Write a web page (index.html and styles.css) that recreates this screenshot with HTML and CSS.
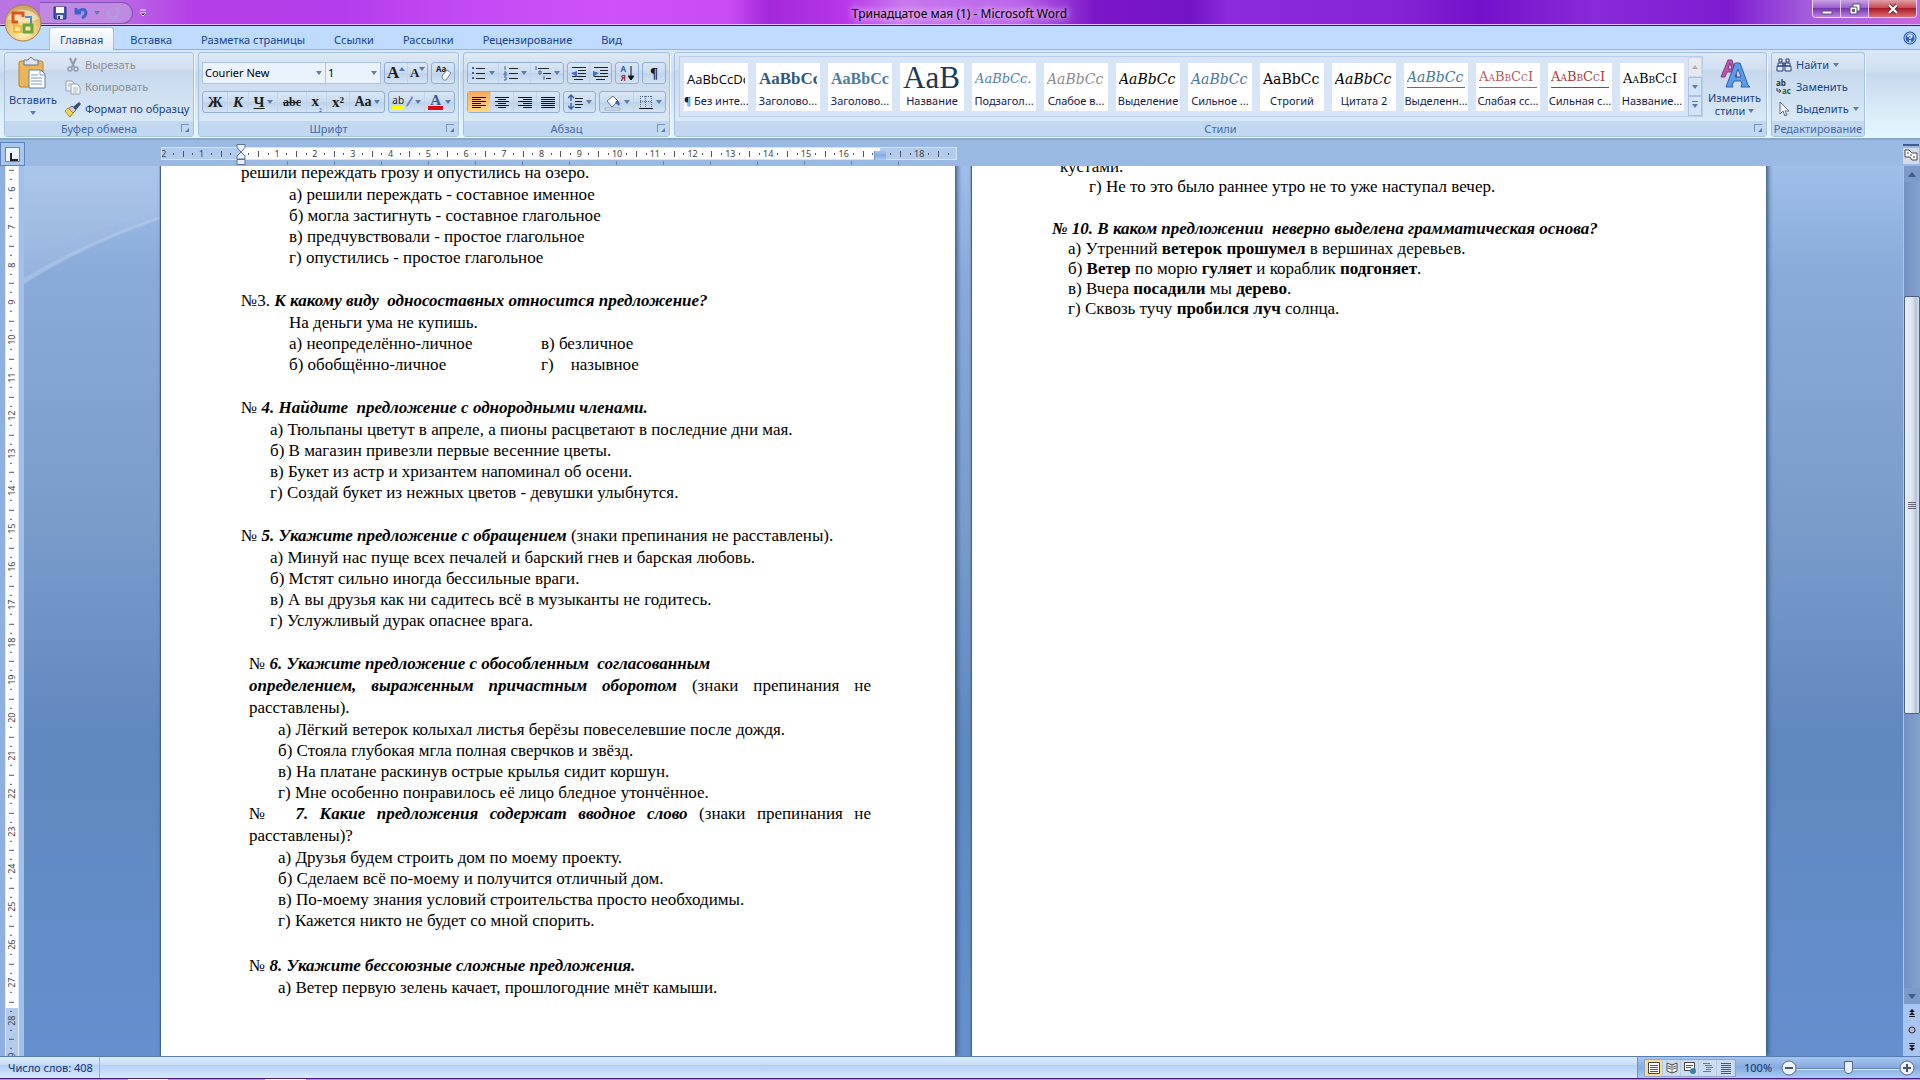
FILE: index.html
```html
<!DOCTYPE html>
<html lang="ru">
<head>
<meta charset="utf-8">
<title>Тринадцатое мая (1) - Microsoft Word</title>
<link rel="stylesheet" href="styles.css">
</head>
<body>
<div class="app">
  <header class="titlebar">
    <button class="orb" aria-label="Office"><svg width="38" height="38" viewBox="0 0 38 38"><defs><radialGradient id="orbfill" cx="50%" cy="75%" r="75%"><stop offset="0" stop-color="#fff6d0"/><stop offset=".45" stop-color="#f3cf83"/><stop offset="1" stop-color="#c9a05a"/></radialGradient></defs><circle cx="19" cy="19" r="18" fill="url(#orbfill)" stroke="#a8813f"/><path d="M3 15a17 14 0 0 1 32 0q-16 6-32 0z" fill="#fff" opacity=".45"/><g fill="none" stroke-width="3"><path d="M14 18H9V9h10v4" stroke="#d9541e"/><path d="M21 13h6v8" stroke="#4b93cf" stroke-width="2"/><path d="M10 21v7h7v-6z" stroke="#f2b830" stroke-width="2"/><path d="M20 21h8v7h-8z" stroke="#69a63a"/></g></svg></button>
    <div class="quick">
      <button aria-label="Сохранить"><svg width="16" height="16" viewBox="0 0 16 16"><path d="M2 2h12v12H3l-1-1z" fill="#3d56b8" stroke="#25367f"/><path d="M4 2h8v6H4z" fill="#fff"/><path d="M5 10h6v4H5z" fill="#d7dcef"/><path d="M6 11h2v3H6z" fill="#25367f"/></svg></button>
      <button aria-label="Отменить"><svg width="16" height="16" viewBox="0 0 16 16"><path d="M3 3v5h5M4 7q7-5 9 0 0 4-4 6" fill="none" stroke="#3f62c8" stroke-width="3"/></svg></button>
      <i class="arrow"></i>
      <button class="dim" aria-label="Повторить"><svg width="16" height="16" viewBox="0 0 16 16"><path d="M4 4q-3 9 4 9 6-1 5-8M10 4h4v4" fill="none" stroke="#b59adb" stroke-width="3"/></svg></button>
    </div>
    <button class="more" aria-label="Настройка"><svg width="8" height="8" viewBox="0 0 8 8"><path d="M1 1h6M1 4h6L4 7z" fill="#2c1554" stroke="#efe0ff"/></svg></button>
    <h1>Тринадцатое мая (1) - Microsoft Word</h1>
    <div class="winbtns">
      <button aria-label="Свернуть"><svg width="12" height="12" viewBox="0 0 12 12"><path d="M1 8h10v3H1z" fill="#fff" stroke="#57506e"/></svg></button>
      <button aria-label="Восстановить"><svg width="12" height="12" viewBox="0 0 12 12"><path d="M4 1h7v7H4z" fill="#fff" stroke="#57506e"/><path d="M1 4h7v7H1z" fill="#fff" stroke="#57506e"/><path d="M3.500 6.500h2v2h-2z" fill="#766c95" stroke="#57506e"/></svg></button>
      <button class="close" aria-label="Закрыть"><svg width="12" height="12" viewBox="0 0 12 12"><path d="M2 2l8 8M10 2l-8 8" stroke="#6a3035" stroke-width="4"/><path d="M2 2l8 8M10 2l-8 8" stroke="#fff" stroke-width="2"/></svg></button>
    </div>
  </header>

  <nav class="tabs">
    <a class="tab on" href="#home">Главная</a>
    <a class="tab" href="#insert">Вставка</a>
    <a class="tab" href="#layout">Разметка страницы</a>
    <a class="tab" href="#refs">Ссылки</a>
    <a class="tab" href="#mail">Рассылки</a>
    <a class="tab" href="#review">Рецензирование</a>
    <a class="tab" href="#view">Вид</a>
    <button class="help" aria-label="Справка"><svg width="14" height="14" viewBox="0 0 14 14"><circle cx="7" cy="7" r="6" fill="#2a62c4" stroke="#173a86"/><circle cx="7" cy="7" r="5" fill="none" stroke="#cfe1ff"/><path d="M5 6q0-2 2-2t2 1q0 1-2 2v1M7 9v2" fill="none" stroke="#fff" stroke-width="1.500"/></svg></button>
  </nav>

  <div class="ribbon">
    <section class="group g-clip">
      <div class="body">
        <button class="big"><svg width="30" height="32" viewBox="0 0 30 32"><rect x="1" y="4" width="24" height="26" rx="2" fill="#eab458" stroke="#b98232"/><path d="M6 3h4q3-5 6 0h4v5H6z" fill="#dfe5ee" stroke="#66758a"/><path d="M11 13h12l4 4v14H11z" fill="#fff" stroke="#5f7fae"/><path d="M22 13v5h5M13 18h7M13 21h11M13 24h11M13 27h11" fill="none" stroke="#7a98c8"/></svg><span>Вставить</span><i class="arrow"></i></button>
        <div class="stack">
          <button class="line off"><svg width="16" height="16" viewBox="0 0 16 16"><path d="M5 1l4 9M11 1L7 10" stroke="#8f9bab" stroke-width="2"/><circle cx="5" cy="12" r="2" fill="none" stroke="#8f9bab" stroke-width="1.500"/><circle cx="11" cy="12" r="2" fill="none" stroke="#8f9bab" stroke-width="1.500"/></svg>Вырезать</button>
          <button class="line off"><svg width="16" height="16" viewBox="0 0 16 16"><path d="M1 2h6l2 2v8H1z" fill="#eef2f8" stroke="#94a3b8"/><path d="M6 5h6l3 3v7H6z" fill="#f8fafd" stroke="#94a3b8"/><path d="M3 5h3M3 7h2M8 9h5M8 11h5M8 13h4" stroke="#a9b5c6"/></svg>Копировать</button>
          <button class="line"><svg width="16" height="16" viewBox="0 0 16 16"><path d="M14 1l2 2-5 6-3-3z" fill="#3d4b78"/><path d="M7 5l4 4-3 3-5-4z" fill="#c7cde0" stroke="#55618a"/><path d="M3 7l5 5-3 4-5-6z" fill="#f3d84f" stroke="#ad8a1e"/></svg>Формат по образцу</button>
        </div>
      </div>
      <h2>Буфер обмена<i class="dlg"></i></h2>
    </section>

    <section class="group g-font">
      <div class="body rows">
        <div class="row">
          <div class="combo">
            <span class="pick name"><select aria-label="Шрифт"><option>Courier New</option></select></span>
            <span class="pick size"><select aria-label="Размер"><option>1</option></select></span>
          </div>
          <div class="set w44"><button class="serif s16" aria-label="Увеличить">A<i class="arrow up high"></i></button><button class="serif s13" aria-label="Уменьшить">A<i class="arrow high"></i></button></div>
          <div class="set w24"><button aria-label="Очистить формат"><svg width="18" height="18" viewBox="0 0 18 18"><text x="2" y="8" font-family="Open Sans" font-size="8" font-weight="700" fill="#222">Aa</text><path d="M8 12l5-6 4 3-5 7q-4 1-4-4z" fill="#fff" stroke="#6e7f9c"/></svg></button></div>
        </div>
        <div class="row">
          <div class="set w184"><button class="serif s15"><b>Ж</b></button><button class="serif s15"><b><i>К</i></b></button><button class="serif s15 wide"><u><b>Ч</b></u><i class="arrow"></i></button><button class="serif s12"><s><b>abc</b></s></button><button class="serif s15"><b>x<sub>₂</sub></b></button><button class="serif s15"><b>x²</b></button><button class="serif s14"><b>Aa</b><i class="arrow"></i></button></div>
          <div class="set w67"><button class="hl" aria-label="Цвет выделения"><span class="ab">ab</span><svg width="7" height="12" viewBox="0 0 7 12"><path d="M6 0l1 2-5 8-2 1 1-3z" fill="#6a86b4"/></svg><i class="arrow"></i></button><button class="fc serif" aria-label="Цвет текста"><span class="aa">A</span><i class="arrow"></i></button></div>
        </div>
      </div>
      <h2>Шрифт<i class="dlg"></i></h2>
    </section>

    <section class="group g-para">
      <div class="body rows">
        <div class="row">
          <div class="set w98">
            <button aria-label="Маркеры"><svg width="16" height="16" viewBox="0 0 16 16"><path d="M1 3h2M1 8h2M1 13h2" stroke="#3c62a8" stroke-width="2"/><path d="M5 3.500h9M5 8.500h9M5 13.500h9" stroke="#222"/></svg><i class="arrow"></i></button>
            <button aria-label="Нумерация"><svg width="16" height="16" viewBox="0 0 16 16"><path d="M2 1v4M1 7h2v2H1v1h3M1 12h2v3H1" fill="none" stroke="#3c62a8"/><path d="M6 3.500h9M6 8.500h9M6 13.500h9" stroke="#222"/></svg><i class="arrow"></i></button>
            <button aria-label="Многоуровневый список"><svg width="18" height="16" viewBox="0 0 18 16"><path d="M2 1v4M5 6h2v3H5zM10 11v4" fill="none" stroke="#3c62a8"/><path d="M4 3.500h11M9 8.500h8M12 13.500h5" stroke="#222"/></svg><i class="arrow"></i></button>
          </div>
          <div class="set w44">
            <button aria-label="Уменьшить отступ"><svg width="16" height="16" viewBox="0 0 16 16"><path d="M1 2.500h14M7 5.500h8M7 8.500h8M1 11.500h14M3 14.500h9" stroke="#222"/><path d="M6 6v6L0 8z" fill="#3f72c4"/></svg></button>
            <button aria-label="Увеличить отступ"><svg width="16" height="16" viewBox="0 0 16 16"><path d="M1 2.500h14M7 5.500h8M7 8.500h8M1 11.500h14M3 14.500h9" stroke="#222"/><path d="M0 6v6l6-4z" fill="#3f72c4"/></svg></button>
          </div>
          <div class="set w24"><button class="sort" aria-label="Сортировка"><span><b>А</b><b>Я</b></span><svg width="6" height="16" viewBox="0 0 6 16"><path d="M3 1v12M0 11l3 4 3-4z" stroke="#111" fill="#111"/></svg></button></div>
          <div class="set w24"><button class="serif s15">¶</button></div>
        </div>
        <div class="row">
          <div class="set w93">
            <button class="on" aria-label="По левому краю"><svg width="16" height="16" viewBox="0 0 16 16"><path d="M1 3.500h14M1 5.500h9M1 7.500h14M1 9.500h9M1 11.500h14M1 13.500h9" stroke="#111"/></svg></button>
            <button aria-label="По центру"><svg width="16" height="16" viewBox="0 0 16 16"><path d="M1 3.500h14M4 5.500h8M1 7.500h14M4 9.500h8M1 11.500h14M4 13.500h8" stroke="#111"/></svg></button>
            <button aria-label="По правому краю"><svg width="16" height="16" viewBox="0 0 16 16"><path d="M1 3.500h14M6 5.500h9M1 7.500h14M6 9.500h9M1 11.500h14M6 13.500h9" stroke="#111"/></svg></button>
            <button aria-label="По ширине"><svg width="16" height="16" viewBox="0 0 16 16"><path d="M1 3.500h14M1 5.500h14M1 7.500h14M1 9.500h14M1 11.500h14M1 13.500h14" stroke="#111"/></svg></button>
          </div>
          <div class="set w32"><button aria-label="Интервал"><svg width="16" height="16" viewBox="0 0 16 16"><path d="M3 2v5M3 9v5M0 4l3-3 3 3M0 12l3 3 3-3" fill="none" stroke="#3f62a8" stroke-width="1.500"/><path d="M7 4.500h8M7 7.500h7M7 10.500h8M7 13.500h6" stroke="#222"/></svg><i class="arrow"></i></button></div>
          <div class="set w67">
            <button aria-label="Заливка"><svg width="18" height="17" viewBox="0 0 18 17"><path d="M3 7l6-5 5 5-6 6z" fill="#fff" stroke="#5a6f95"/><path d="M13 6q4 2 2 6-2-2-4-3z" fill="#3f62a8"/><path d="M1 14h15v2H1z" fill="#fff" stroke="#9aa8be"/></svg><i class="arrow"></i></button>
            <button aria-label="Границы"><svg width="16" height="16" viewBox="0 0 16 16"><path d="M2 2.500h12M2 7.500h12M2.500 2v11M7.500 2v11M13.500 2v11" stroke="#56657f" stroke-dasharray="1 1"/><path d="M1 14.500h14" stroke="#111"/></svg><i class="arrow"></i></button>
          </div>
        </div>
      </div>
      <h2>Абзац<i class="dlg"></i></h2>
    </section>

    <section class="group g-styles">
      <div class="body">
        <div class="gallery">
          <div class="cards">
            <button class="card"><span class="pv p-sans">AaBbCcDc</span><span class="cap">¶ Без инте...</span></button>
            <button class="card"><span class="pv p-h1">AaBbCc</span><span class="cap">Заголово...</span></button>
            <button class="card"><span class="pv p-h2">AaBbCc</span><span class="cap">Заголово...</span></button>
            <button class="card"><span class="pv p-title">AaB</span><span class="cap">Название</span></button>
            <button class="card"><span class="pv p-sub">AaBbCc.</span><span class="cap">Подзагол...</span></button>
            <button class="card"><span class="pv p-weak">AaBbCc</span><span class="cap">Слабое в...</span></button>
            <button class="card"><span class="pv p-em">AaBbCc</span><span class="cap">Выделение</span></button>
            <button class="card"><span class="pv p-strong">AaBbCc</span><span class="cap">Сильное ...</span></button>
            <button class="card"><span class="pv p-strict">AaBbCc</span><span class="cap">Строгий</span></button>
            <button class="card"><span class="pv p-em">AaBbCc</span><span class="cap">Цитата 2</span></button>
            <button class="card"><span class="pv p-strong ul">AaBbCc</span><span class="cap">Выделенн...</span></button>
            <button class="card"><span class="pv p-ref ul">AaBbCcI</span><span class="cap">Слабая сс...</span></button>
            <button class="card"><span class="pv p-ref dark ul">AaBbCcI</span><span class="cap">Сильная с...</span></button>
            <button class="card"><span class="pv p-ref black">AaBbCcI</span><span class="cap">Название...</span></button>
          </div>
          <div class="spin"><button class="flat" aria-label="Вверх"><i class="arrow up"></i></button><button aria-label="Вниз"><i class="arrow"></i></button><button aria-label="Все стили"><i class="arrow bar"></i></button></div>
        </div>
        <button class="big change"><svg width="32" height="32" viewBox="0 0 32 32"><path d="M2 20L9 3h4l5 17h-4l-1-5H8l-2 5zM9 12h4l-2-6z" fill="#c44fa8" stroke="#7b3c86"/><path d="M7 30L16 6h5l8 22 2 2h-9l1-3-1-3h-7l-2 4 1 2zM16 20h6l-3-8z" fill="#5d9be6" stroke="#2c5cab"/></svg><span>Изменить<br>стили <i class="arrow"></i></span></button>
      </div>
      <h2>Стили<i class="dlg"></i></h2>
    </section>

    <section class="group g-edit">
      <div class="body">
        <div class="stack">
          <button class="line"><svg width="16" height="16" viewBox="0 0 16 16"><path d="M3 2h3v3H3zM10 2h3v3h-3zM2 6h5v3H2zM9 6h5v3H9zM1 9h6v5H1zM9 9h6v5H9zM7 6h2v3H7z" fill="#dfe9fa" stroke="#243f78"/></svg>Найти<i class="arrow"></i></button>
          <button class="line"><svg width="16" height="16" viewBox="0 0 16 16"><text x="0" y="7" font-family="Open Sans" font-size="8" font-weight="700" fill="#333">ab</text><text x="6" y="15" font-family="Open Sans" font-size="8" font-weight="700" fill="#1e6b2c">ac</text><path d="M1 9v3h4M3 10l2 2-2 2" fill="none" stroke="#345"/></svg>Заменить</button>
          <button class="line"><svg width="16" height="16" viewBox="0 0 16 16"><path d="M4 1v12l3-3 2 5 2-1-2-4h4z" fill="#fff" stroke="#5b6b86"/></svg>Выделить<i class="arrow"></i></button>
        </div>
      </div>
      <h2>Редактирование</h2>
    </section>
  </div>

  <div class="rulerbar">
    <button class="tabsel" aria-label="Табуляция"><span></span></button>
    <div class="hruler">
      <div class="track"><div class="cells"><span>2</span><span>1</span><span></span><span>1</span><span>2</span><span>3</span><span>4</span><span>5</span><span>6</span><span>7</span><span>8</span><span>9</span><span>10</span><span>11</span><span>12</span><span>13</span><span>14</span><span>15</span><span>16</span><span></span><span>18</span><span></span></div></div>
      <svg class="mark left" width="10" height="22" viewBox="0 0 10 22"><path d="M1 .5h8v3L5 8 1 3.500zM1 15v-3l4-4 4 4v3zM1 15.500h8v5H1z" fill="#e9f1fc" stroke="#5c6f92"/></svg>
      <svg class="mark right" width="10" height="9" viewBox="0 0 10 9"><path d="M1 8.500V5l4-4 4 4v3.500z" fill="#e9f1fc" stroke="#5c6f92"/></svg>
    </div>
    <button class="rulerbtn" aria-label="Линейка"><svg width="14" height="12" viewBox="0 0 14 12"><path d="M1 1h4l3 3h5v7H8L6 8H1z" fill="#fff" stroke="#445"/><path d="M3 4h2M6 6h2M10 7v2" stroke="#445"/></svg></button>
  </div>

  <main class="work">
    <div class="vruler"><div class="cells"><span>6</span><span>7</span><span>8</span><span>9</span><span>10</span><span>11</span><span>12</span><span>13</span><span>14</span><span>15</span><span>16</span><span>17</span><span>18</span><span>19</span><span>20</span><span>21</span><span>22</span><span>23</span><span>24</span><span>25</span><span>26</span><span>27</span><span>28</span><span>29</span></div></div>
    <div class="canvas">
      <svg class="wave" width="137" height="130" viewBox="0 0 137 130"><path d="M0 0h137v46Q60 66 0 96z" fill="#fff" opacity=".12"/><path d="M0 96Q60 66 137 46v6Q60 78 0 118z" fill="#fff" opacity=".1"/><path d="M0 112Q60 76 137 50v3Q60 80 0 118z" fill="#fff" opacity=".15"/></svg>
      <article class="page p1">
        <section class="q deep">
          <p class="head">решили переждать грозу и опустились на озеро.</p>
          <p>а) решили переждать - составное именное</p>
          <p>б) могла застигнуть - составное глагольное</p>
          <p>в) предчувствовали - простое глагольное</p>
          <p>г) опустились - простое глагольное</p>
        </section>
        <section class="q deep">
          <p class="head">№3. <b>К какому виду&nbsp; односоставных относится предложение?</b></p>
          <p>На деньги ума не купишь.</p>
          <p><span class="col">а) неопределённо-личное</span>в) безличное</p>
          <p><span class="col">б) обобщённо-личное</span>г)&nbsp;&nbsp;&nbsp; назывное</p>
        </section>
        <section class="q">
          <p class="head">№ <b>4. Найдите&nbsp; предложение с однородными членами.</b></p>
          <p>а) Тюльпаны цветут в апреле, а пионы расцветают в последние дни мая.</p>
          <p>б) В магазин привезли первые весенние цветы.</p>
          <p>в) Букет из астр и хризантем напоминал об осени.</p>
          <p>г) Создай букет из нежных цветов - девушки улыбнутся.</p>
        </section>
        <section class="q">
          <p class="head">№ <b>5. Укажите предложение с обращением</b> (знаки препинания не расставлены).</p>
          <p>а) Минуй нас пуще всех печалей и барский гнев и барская любовь.</p>
          <p>б) Мстят сильно иногда бессильные враги.</p>
          <p>в) А вы друзья как ни садитесь всё в музыканты не годитесь.</p>
          <p>г) Услужливый дурак опаснее врага.</p>
        </section>
        <section class="q inset">
          <p class="head">№ <b>6. Укажите предложение с обособленным&nbsp; согласованным</b></p>
          <p class="head just"><b>определением, выраженным причастным оборотом</b> (знаки препинания не расставлены).</p>
          <p>а) Лёгкий ветерок колыхал листья берёзы повеселевшие после дождя.</p>
          <p>б) Стояла глубокая мгла полная сверчков и звёзд.</p>
          <p>в) На платане раскинув острые крылья сидит коршун.</p>
          <p>г) Мне особенно понравилось её лицо бледное утончённое.</p>
          <p class="head just">№ &nbsp;<b>7. Какие предложения содержат вводное слово</b> (знаки препинания не расставлены)?</p>
          <p>а) Друзья будем строить дом по моему проекту.</p>
          <p>б) Сделаем всё по-моему и получится отличный дом.</p>
          <p>в) По-моему знания условий строительства просто необходимы.</p>
          <p>г) Кажется никто не будет со мной спорить.</p>
        </section>
        <section class="q inset">
          <p class="head">№ <b>8. Укажите бессоюзные сложные предложения.</b></p>
          <p>а) Ветер первую зелень качает, прошлогодние мнёт камыши.</p>
        </section>
      </article>
      <article class="page p2">
        <section class="q tail">
          <p class="head">кустами.</p>
          <p>г) Не то это было раннее утро не то уже наступал вечер.</p>
        </section>
        <section class="q ten">
          <p class="head"><b>№ 10. В каком предложении&nbsp; неверно выделена грамматическая основа?</b></p>
          <p>а) Утренний <strong>ветерок прошумел</strong> в вершинах деревьев.</p>
          <p>б) <strong>Ветер</strong> по морю <strong>гуляет</strong> и кораблик <strong>подгоняет</strong>.</p>
          <p>в) Вчера <strong>посадили</strong> мы <strong>дерево</strong>.</p>
          <p>г) Сквозь тучу <strong>пробился луч</strong> солнца.</p>
        </section>
      </article>
    </div>
    <div class="scroll">
      <button aria-label="Вверх"><i class="arrow up"></i></button>
      <div class="rail"><div class="thumb"><span></span></div></div>
      <button aria-label="Вниз"><i class="arrow"></i></button>
      <div class="browse">
        <button aria-label="Предыдущая"><svg width="8" height="8" viewBox="0 0 8 8"><path d="M4 0l3 3H1zM4 3l3 3H1zM1 7h6z" fill="#111"/><path d="M1 7.500h6" stroke="#111"/></svg></button>
        <button aria-label="Объект"><svg width="8" height="8" viewBox="0 0 8 8"><circle cx="4" cy="4" r="3" fill="#b5bdc9" stroke="#222"/></svg></button>
        <button aria-label="Следующая"><svg width="8" height="8" viewBox="0 0 8 8"><path d="M4 8L1 5h6zM4 5L1 2h6z" fill="#111"/><path d="M1 .5h6" stroke="#111"/></svg></button>
      </div>
    </div>
  </main>

  <footer class="status">
    <button class="words">Число слов: 408</button>
    <div class="right">
      <div class="views">
        <button class="on" aria-label="Разметка"><svg width="12" height="12" viewBox="0 0 12 12"><path d="M.5.5h11v11H.5z" fill="#fff" stroke="#444"/><path d="M2 3.500h8M2 5.500h8M2 7.500h8M2 9.500h8" stroke="#555"/></svg></button>
        <button aria-label="Чтение"><svg width="12" height="12" viewBox="0 0 12 12"><path d="M1 1l5 2 5-2v8l-5 2-5-2z" fill="#fff" stroke="#444"/><path d="M6 3v8M2 4l3 1M2 6l3 1M7 5l3-1M7 7l3-1" stroke="#555"/></svg></button>
        <button aria-label="Веб"><svg width="12" height="12" viewBox="0 0 12 12"><path d="M.5.5h10v8H.5z" fill="#fff" stroke="#444"/><path d="M2 3.500h7M2 5.500h5" stroke="#555"/><circle cx="9" cy="9" r="3" fill="#3d83a8"/></svg></button>
        <button aria-label="Структура"><svg width="12" height="12" viewBox="0 0 12 12"><path d="M1 1.500h7M3 3.500h7M4 5.500h7M4 7.500h5M1 9.500h8" stroke="#777"/></svg></button>
        <button aria-label="Черновик"><svg width="12" height="12" viewBox="0 0 12 12"><path d="M1 1.500h10M1 3.500h10M1 5.500h10M1 7.500h10M1 9.500h10M1 11.500h10" stroke="#555"/></svg></button>
      </div>
      <button class="pct">100%</button>
      <button class="zoom" aria-label="Уменьшить масштаб"><svg width="16" height="16" viewBox="0 0 16 16"><circle cx="8" cy="8" r="7" fill="#eef3fb" stroke="#566784"/><path d="M4 8h8" stroke="#46566f" stroke-width="2"/></svg></button>
      <input class="slider" type="range" min="0" max="100" value="50" aria-label="Масштаб">
      <button class="zoom" aria-label="Увеличить масштаб"><svg width="16" height="16" viewBox="0 0 16 16"><circle cx="8" cy="8" r="7" fill="#eef3fb" stroke="#566784"/><path d="M4 8h8M8 4v8" stroke="#46566f" stroke-width="2"/></svg></button>
    </div>
  </footer>
  <div class="edge"></div>
</div>
</body>
</html>
```
FILE: styles.css
```css
* { box-sizing: border-box; }
body { margin: 0; font: 11px/16px "Noto Sans", "Open Sans", sans-serif; color: #15428b; }
button { font: inherit; color: inherit; background: none; border: 0; padding: 0; margin: 0; white-space: nowrap; }
svg { display: block; flex: none; }
h1, h2, p { margin: 0; font-weight: 400; }
a { color: inherit; text-decoration: none; }
.app { height: 100vh; display: flex; flex-direction: column; overflow: hidden; }

.arrow { display: inline-block; border: 3px solid transparent; border-top: 4px solid #5b7aa8; border-bottom: 0; flex: none; }
.arrow.up { border-top: 0; border-bottom: 4px solid #5b7aa8; }
.arrow.bar { position: relative; }
.arrow.bar::before { content: ""; position: absolute; left: -3px; top: -7px; width: 6px; height: 1px; background: #5b7aa8; }
.arrow.high { align-self: flex-start; margin-top: 4px; }

/* Title bar */
.titlebar { position: relative; z-index: 2; height: 26px; flex: none; display: flex; align-items: flex-start; border-bottom: 1px solid #42107c; box-shadow: inset 0 -1px #e3b8f7;
  background: linear-gradient(90deg, #b775e2 0, #ba6ce6 6%, #b53fe6 10%, #b63dec 18%, #c24af2 24%, #cf52f8 32%, #c84bf3 38%, #a229da 40%, #b737e8 44%, #c877ee 47%, #bb65ea 53%, #7c17c8 57%, #7412c6 62%, #8d2bdc 64%, #8522d4 73%, #7410c8 77%, #8a29d8 83%, #7e1bd0 90%, #a35bdc 94%, #c468e0 100%); }
.orb { position: absolute; left: 4px; top: 4px; z-index: 3; }
.quick { display: flex; align-items: center; gap: 5px; width: 93px; height: 22px; margin-left: 40px; padding-left: 12px; border: 1px solid #8254b4; border-left: 0; border-radius: 0 11px 11px 0; background: #c08ae2; margin-top: 2px; }
.more { margin: 9px 0 0 6px; }
.titlebar h1 { flex: 1; text-align: center; line-height: 27px; font-size: 12px; color: #000; padding-right: 40px; text-shadow: 0 0 6px #f3d5ff, 0 0 8px #f3d5ff; }
.winbtns { display: flex; margin-right: 3px; height: 18px; border: 1px solid #f0d8fa; border-top: 0; border-radius: 0 0 4px 4px; overflow: hidden; }
.winbtns button { width: 28px; display: grid; place-items: center; background: linear-gradient(#c9a3e6, #9457c8 50%, #7a35b4 50%, #b982e0); border-right: 1px solid #e4c8f3; }
.winbtns .close { width: 47px; border: 0; background: linear-gradient(#e0a0a8, #c9474f 48%, #aa1a26 50%, #de6c70); }

/* Tabs */
.tabs { height: 24px; flex: none; display: flex; padding: 1px 3px 0 49px; background: #bfdbff; border-bottom: 1px solid #8db2e3; }
.tab { padding: 0 13px; margin-right: 3px; line-height: 25px; }
.tab.on { padding: 0 10px; background: linear-gradient(#fdfeff, #e3edf8); border: 1px solid #9cbfe8; border-bottom: 0; border-radius: 3px 3px 0 0; line-height: 24px; margin-bottom: -1px; }
.help { margin-left: auto; }

/* Ribbon */
.ribbon { height: 90px; flex: none; display: flex; gap: 4px; padding: 2px 55px 2px 4px; background: linear-gradient(#dbe7f5 0, #cfdff2 25%, #c7d8ed 26%, #dff0fb 80%, #e3f6fd); border-bottom: 2px solid #86a9c9; color: #15428b; }
.group { display: flex; flex-direction: column; height: 85px; border: 1px solid #a6c1de; border-radius: 3px; background: linear-gradient(#dee8f5 0, #d1dff0 20%, #c7d8ed 21%, #d8e8f5 80%); box-shadow: 1px 1px #f2f8fe; }
.group h2 { position: relative; height: 15px; line-height: 15px; text-align: center; color: #3e6aaa; background: #c2d8f0; font-size: 11px; }
.dlg { position: absolute; right: 4px; top: 3px; width: 8px; height: 8px; border: 1px solid #7592ba; border-width: 1px 0 0 1px; }
.dlg::after { content: ""; position: absolute; right: 0; bottom: 0; border: 2px solid #5b7aa8; border-color: transparent #5b7aa8 #5b7aa8 transparent; }
.body { height: 68px; display: flex; }
.g-clip { width: 190px; }
.g-font { width: 261px; }
.g-para { width: 207px; }
.g-styles { flex: 1; min-width: 0; }
.g-edit { width: 94px; }
.big { display: flex; flex-direction: column; align-items: center; padding-top: 4px; width: 56px; }
.big span { line-height: 14px; margin-top: 4px; }
.big > .arrow { margin-top: 4px; }
.stack { display: flex; flex-direction: column; padding: 1px 0 0 4px; }
.line { display: flex; align-items: center; gap: 4px; height: 22px; }
.off { color: #8d8d8d; }
.rows { flex-direction: column; gap: 7px; padding: 9px 3px 0; }
.row { display: flex; gap: 3px; height: 22px; }
.combo { display: flex; width: 179px; }
.pick { position: relative; }
.pick::after { content: ""; position: absolute; right: 4px; top: 9px; border: 3px solid transparent; border-top: 4px solid #5b7aa8; border-bottom: 0; }
.pick.name { width: 124px; }
.pick.size { width: 55px; }
.pick select { appearance: none; width: 100%; height: 22px; border: 1px solid #abc4e0; background: #eaf2fb; font: inherit; color: #000; padding: 0 2px; border-radius: 0; }
.pick.size select { border-left: 0; }
.set { display: flex; border: 1px solid #93aecf; border-radius: 3px; background: linear-gradient(#d9e6f5, #c9dbef 50%, #bed2ea 51%, #d2e3f4); }
.set button { flex: 1 1 auto; display: flex; align-items: center; justify-content: center; gap: 2px; color: #1c1c1c; border-right: 1px solid #c2d4ea; }
.set button:last-child { border-right: 0; }
.set .on { background: linear-gradient(#f5a860, #ffd883); }
.w24 { width: 24px; } .w32 { width: 33px; } .w44 { width: 45px; } .w67 { width: 67px; } .w93 { width: 93px; } .w98 { width: 98px; } .w184 { width: 184px; }
.serif { font-family: "Liberation Serif", serif; font-weight: 700; }
.s12 { font-size: 12px; } .s13 { font-size: 13px; } .s14 { font-size: 14px; } .s15 { font-size: 15px; } .s16 { font-size: 17px; }
.set .s13, .set .s16 { gap: 0; }
.serif sub { font-size: 9px; line-height: 8px; color: #3c62a8; }
.hl { font-size: 10px; }
.hl .ab { border-bottom: 4px solid #ff0; line-height: 12px; }
.fc .aa { border-bottom: 4px solid #d80f17; font-size: 15px; line-height: 12px; color: #3c5a96; padding: 0 2px; }
.sort span { display: flex; flex-direction: column; font-size: 8px; line-height: 9px; color: #3a5aa8; }
.sort b + b { color: #9c3434; }

/* Styles gallery */
.g-styles .body { padding: 3px 4px 0; }
.gallery { flex: 1; min-width: 0; height: 61px; display: flex; justify-content: space-between; border: 1px solid #b9cee8; background: #d7e5f6; }
.cards { display: flex; gap: 8px; padding: 6px 4px; overflow: hidden; }
.card { flex: none; width: 64px; height: 48px; background: #fff; overflow: hidden; color: #000; display: flex; flex-direction: column; justify-content: flex-end; }
.pv { display: block; height: 28px; width: 58px; margin: 0 3px; overflow: hidden; text-align: left; font: 14px/28px "DejaVu Serif", serif; }
.cap { display: block; font-size: 11px; line-height: 16px; height: 18px; text-align: center; color: #101c50; }
.p-sans { font: 13px/28px "Open Sans", sans-serif; }
.p-h1 { font: 700 17px/28px "Liberation Serif", serif; color: #2f587c; }
.p-h2 { font: 700 16px/28px "Liberation Serif", serif; color: #4b7ba0; }
.p-title { font: 31px/26px "Liberation Serif", serif; color: #1b3a55; }
.p-sub { font-style: italic; color: #4f81a8; font-size: 13px; }
.p-weak { font-style: italic; color: #8c8c8c; }
.p-em { font-style: italic; }
.p-strong { font-style: italic; color: #4577a2; }
.p-strict { color: #000; }
.p-ref { font-variant: small-caps; color: #b85a55; font-size: 13px; }
.p-ref.dark { color: #a83b36; }
.p-ref.black { color: #000; }
.ul { height: 22px; line-height: 22px; border-bottom: 1px solid; margin-bottom: 5px; }
.spin { width: 14px; display: flex; flex-direction: column; }
.spin button { flex: 1; border: 1px solid #a9c2e2; background: #d3e3f7; display: grid; place-items: center; }
.spin .flat { background: #e6e9ee; border-color: #d0d7e2; }
.spin .flat .arrow { border-bottom-color: #a8adb6; }
.change { width: 59px; padding: 1px 0 0 4px; }
.change span { line-height: 13px; margin-top: 2px; }
.change .arrow { vertical-align: 2px; }

/* Rulers */
.rulerbar { height: 26px; flex: none; display: flex; justify-content: space-between; align-items: flex-start; background: #9bbae3; padding-top: 2px; }
.tabsel { width: 25px; height: 24px; border: 1px solid #5c83bd; background: #a9c6ee; display: grid; place-items: center; }
.tabsel span { width: 15px; height: 15px; border: 1px solid #6a86b5; background: #eef4fd; position: relative; }
.tabsel span::after { content: ""; position: absolute; left: 4px; top: 5px; width: 6px; height: 6px; border-left: 2px solid #223; border-bottom: 2px solid #223; }
.hruler { position: relative; width: 796px; margin: 0 auto 0 136px; padding-top: 5px; }
.hruler::after { content: ""; display: block; margin: 1px 37px 0 80px; height: 4px; background: repeating-linear-gradient(90deg, transparent 0 46px, #6c86ad 46px 47px); }
.track { height: 13px; overflow: hidden; border: 1px solid #d5e4f8; background: linear-gradient(90deg, #b3cbec 79px, #fff 79px 718px, #b3cbec 718px); }
.cells { display: flex; font-size: 9px; line-height: 11px; color: #444; }
.track .cells { width: 831px; margin-left: -17px; }
.cells span { flex: 1 1 0; text-align: center; }
.track span { background: linear-gradient(#556 0 0) 0 3px / 1px 6px no-repeat, linear-gradient(#556 0 0) 26% 5px / 1px 2px no-repeat, linear-gradient(#556 0 0) 76% 5px / 1px 2px no-repeat; }
.mark { position: absolute; }
.mark.left { left: 75px; top: 2px; }
.mark.right { left: 713px; top: 9px; }
.rulerbtn { width: 16px; height: 22px; margin-right: 1px; padding-top: 4px; background: linear-gradient(#9bbae3 2px, #41598c 2px 4px, #9bbae3 4px 6px, #d5dbe6 6px); display: grid; place-items: center; }

/* Workspace */
.work { flex: 1; min-height: 0; display: flex; overflow: hidden; }
.vruler { width: 24px; flex: none; background: linear-gradient(90deg, #8fb0de 5px, #d9e7fa 5px 6px, transparent 6px 18px, #d9e7fa 18px 19px, #a3c0ea 19px), linear-gradient(#fff 842px, #b3cbec 842px); padding: 4px 6px 0; overflow: hidden; }
.vruler .cells { flex-direction: column; height: 907px; width: 12px; }
.vruler span { writing-mode: vertical-rl; rotate: 180deg; line-height: 12px; background: linear-gradient(#556 0 0) 4px 100% / 5px 1px no-repeat, linear-gradient(#556 0 0) 6px 24% / 2px 1px no-repeat, linear-gradient(#556 0 0) 6px 76% / 2px 1px no-repeat; }
.canvas { position: relative; flex: 1; min-width: 0; display: flex; gap: 17px; padding-left: 137px; background: linear-gradient(#9fbfe9 0, #8aabd9 12%, #7a9ccb 40%, #5f88bf 65%, #6590cd 100%); }
.wave { position: absolute; left: 0; top: 0; }
.page { position: relative; flex: none; width: 794px; background: #fff; color: #000; font: 17px/21px "Liberation Serif", serif; box-shadow: 2px 0 5px #33507c, -1px 0 1px #4a6796; }
.p1 { padding: 0 84px 0 80px; margin-top: -4px; }
.q { margin-bottom: 22px; }
.q p { padding-left: 29px; white-space: nowrap; }
.q.deep p { padding-left: 48px; }
.q.inset { padding-left: 8px; margin-bottom: 24px; }
.q .head, .q.deep .head { padding-left: 0; line-height: 22px; }
.q p.just { white-space: normal; text-align: justify; }
.q b { font-style: italic; }
.col { display: inline-block; width: 252px; }
.p2 { padding: 0 84px 0 80px; margin-top: -9px; line-height: 20px; }
.p2 .q .head { line-height: 20px; }
.tail { padding-left: 8px; }
.q.ten p { padding-left: 16px; }
.q.ten .head { padding-left: 0; }

.scroll { width: 17px; flex: none; display: flex; flex-direction: column; background: #7c9bc8; border-left: 1px solid #a9c5ee; }
.scroll button { height: 16px; display: grid; place-items: center; }
.scroll .arrow { border-width: 4px; border-top-width: 5px; border-bottom-width: 0; border-top-color: #3f5a88; }
.scroll .arrow.up { border-top-width: 0; border-bottom: 5px solid #3f5a88; }
.rail { flex: 1; padding-top: 114px; background: linear-gradient(90deg, #7191c2, #84a2cf); }
.thumb { height: 418px; border: 1px solid #50607e; border-radius: 2px; background: linear-gradient(90deg, #e8edf5, #dce5f0 50%, #b5c5d8 80%, #d9e3ef); display: grid; place-items: center; }
.thumb span { width: 8px; height: 7px; background: repeating-linear-gradient(#667 0 1px, transparent 1px 2px); }
.browse { background: #a8c4f0; height: 52px; display: flex; flex-direction: column; justify-content: space-around; }

/* Status bar */
.status { height: 22px; flex: none; display: flex; justify-content: space-between; border-top: 1px solid #567db1; background: linear-gradient(#dfeafb, #c9defa 35%, #b3d0f7 40%, #d8eafd); color: #15326e; }
.words { padding: 0 8px; width: 100px; text-align: left; border-right: 1px solid #8fb0dc; }
.right { display: flex; align-items: center; padding: 0 5px 0 6px; background: linear-gradient(#a7c6f0, #86abdf 50%, #a9cdf5); border-left: 1px solid #6f94c8; }
.views { display: flex; width: 92px; height: 18px; border: 1px solid #8ba7cb; background: #cbdcf1; margin-right: 8px; }
.views button { flex: 1; display: grid; place-items: center; border-right: 1px solid #b8cce6; }
.views .on { background: #fcd98c; }
.pct { width: 37px; text-align: left; }
.slider { appearance: none; width: 102px; height: 16px; margin: 0; background: linear-gradient(#5f83b8 0 0) 0 8px / 100% 1px no-repeat, linear-gradient(#e3effd 0 0) 0 9px / 100% 1px no-repeat; }
.slider::-webkit-slider-thumb { appearance: none; width: 9px; height: 13px; border: 1px solid #566784; border-radius: 1px 1px 5px 5px; background: #e6eefa; }
.edge { height: 2px; flex: none; border-top: 1px solid #4c1a7c; background: linear-gradient(90deg, #b48be0 128px, #fff 128px 168px, #b48be0 168px 265px, #fff 265px 306px, #b48be0 306px); }
```
